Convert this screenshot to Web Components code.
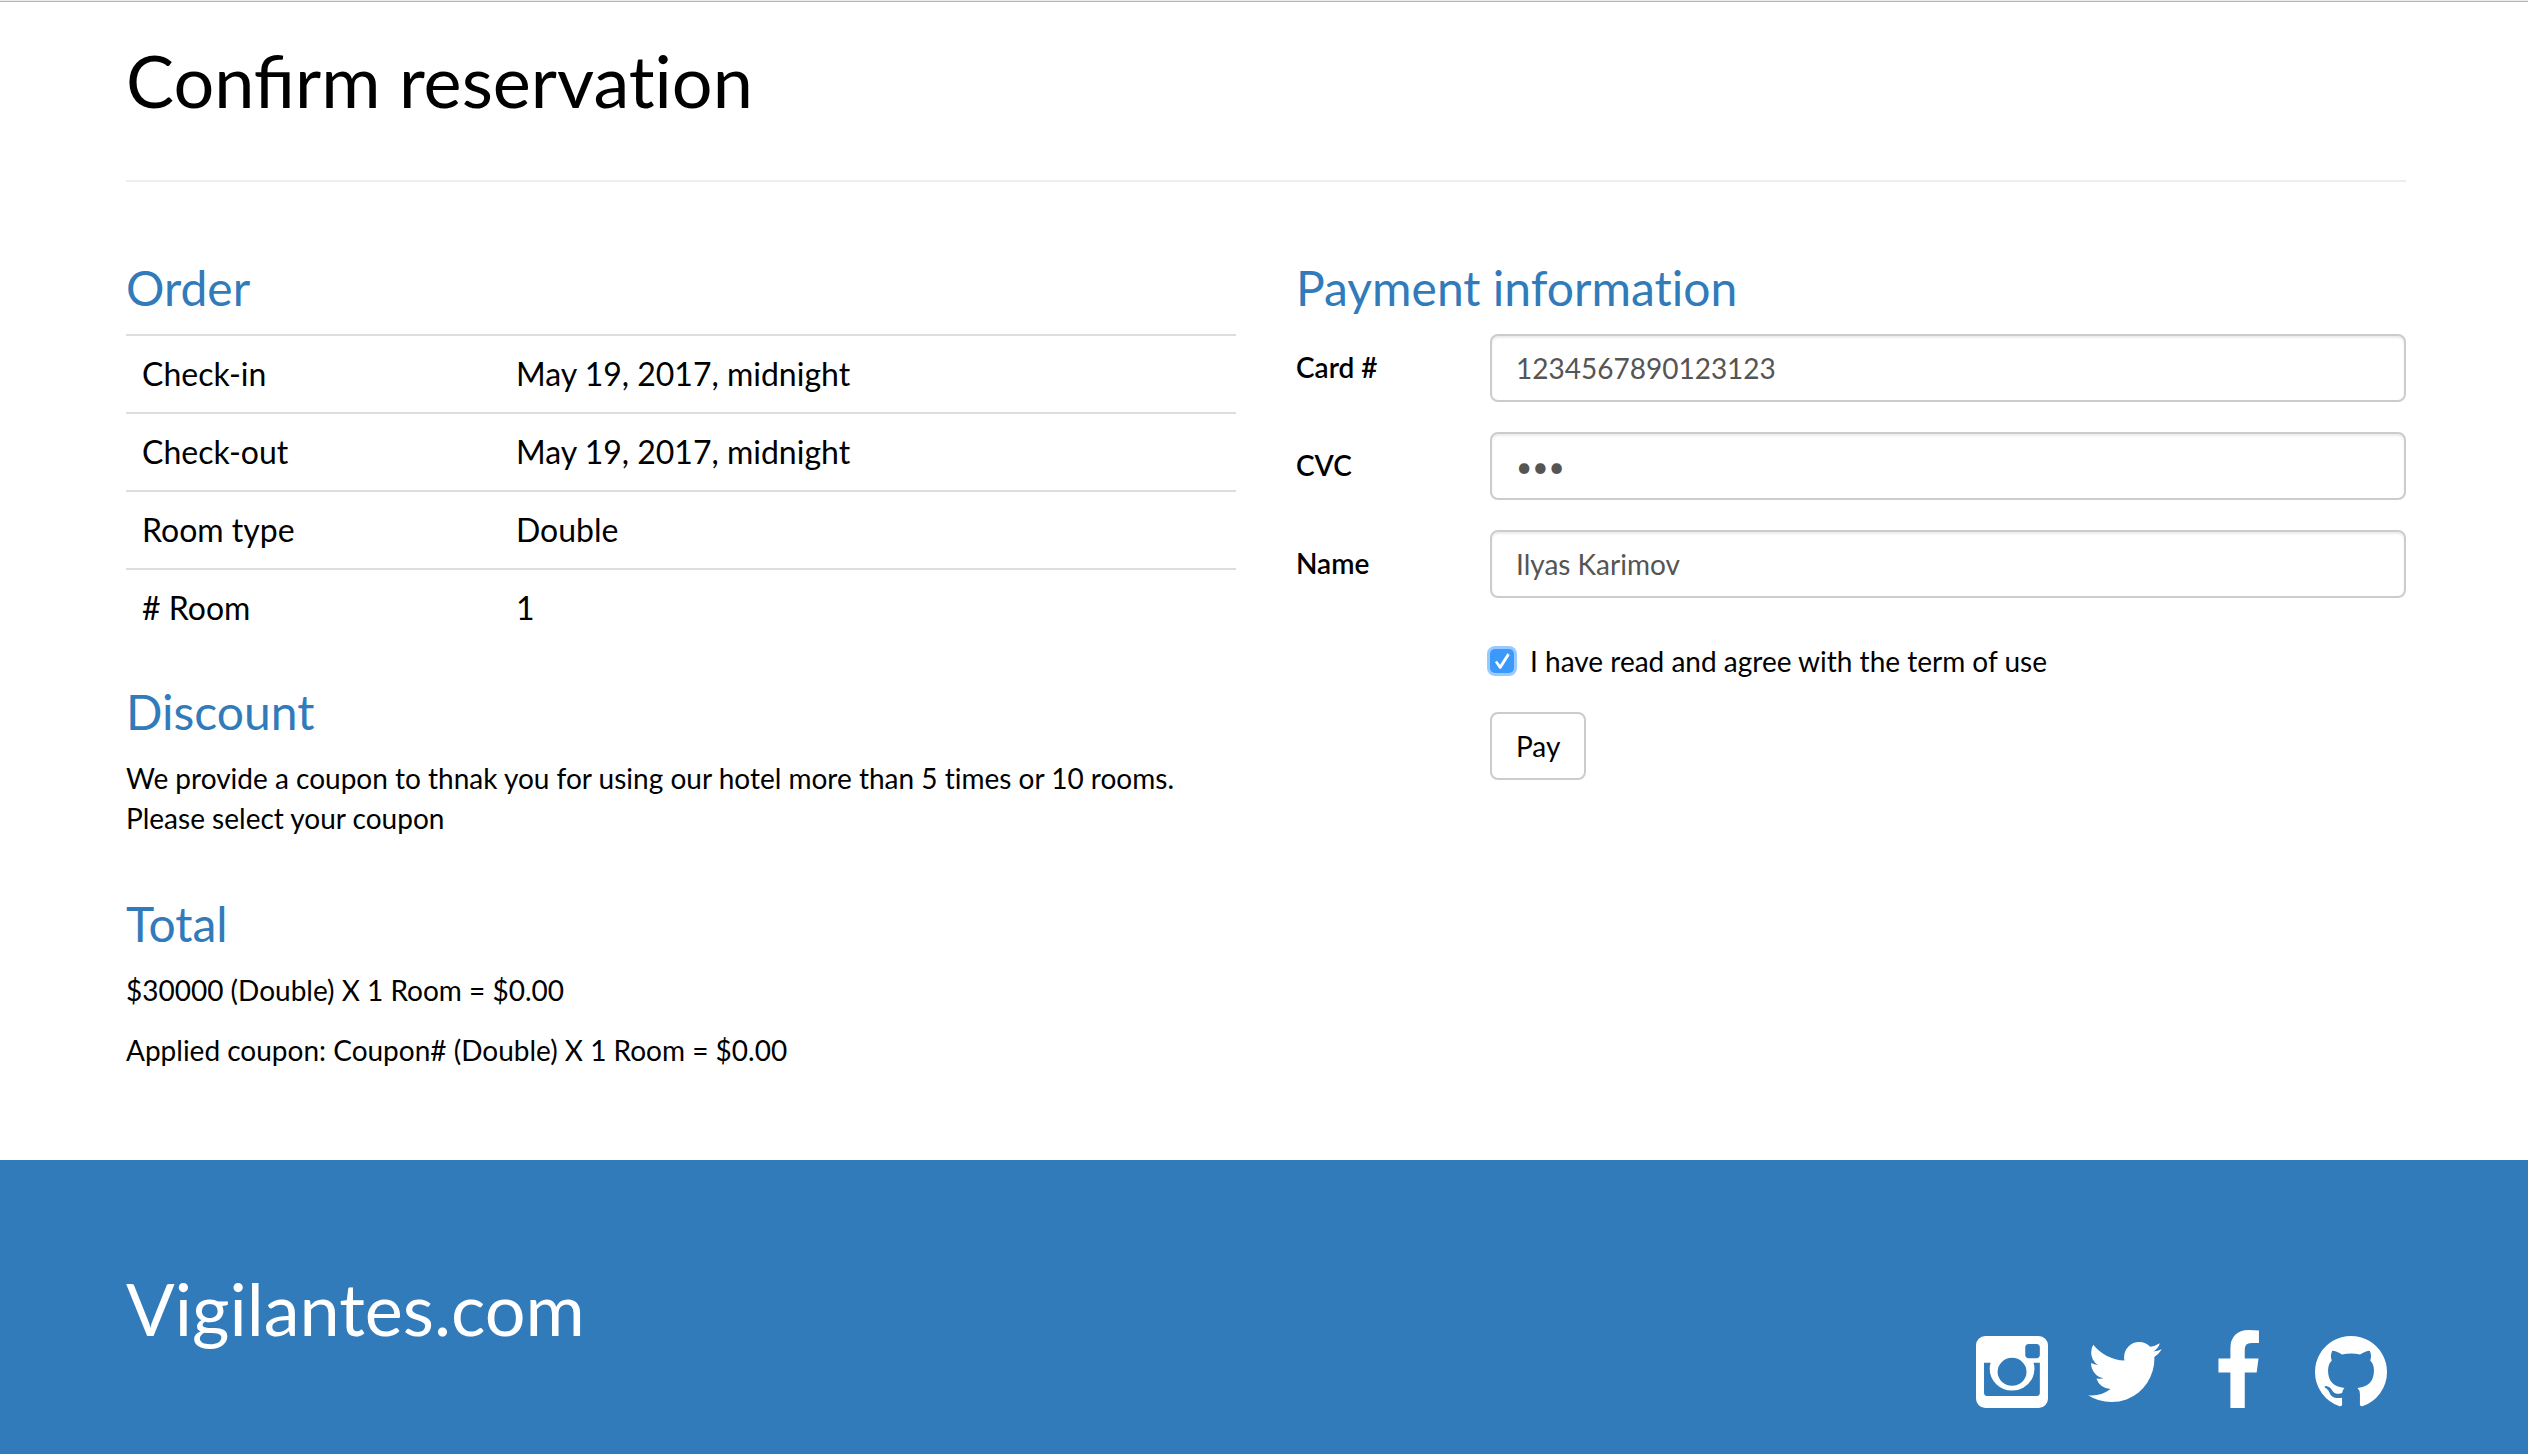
<!DOCTYPE html>
<html lang="en">
<head>
<meta charset="utf-8">
<title>Confirm reservation</title>
<style>
  html, body { margin: 0; min-height: 100%; background: #fff; }
  body {
    font-family: Lato, "Liberation Sans", sans-serif;
    font-size: 28px;
    line-height: 40px;
    font-variant-ligatures: none;
    color: #000;
    --brand: #327bba;
    --line: #ddd;
    --control: #ccc;
    --gutter-left: 126px;
    --gutter-right: 122px;
  }
  .joined { font-variant-ligatures: common-ligatures; }
</style>
</head>
<body>
<reservation-page>
  <page-title slot="title"><span class="joined">Confirm</span> reservation</page-title>

  <info-section slot="order" heading="Order">
    <order-table></order-table>
  </info-section>
  <info-section slot="order" heading="Discount">
    <p>We provide a coupon to thnak you for using our hotel more than 5 times or 10 rooms.<br>Please select your coupon</p>
  </info-section>
  <info-section slot="order" heading="Total">
    <p>$30000 (Double) X 1 Room = $0.00</p>
    <p>Applied coupon: Coupon# (Double) X 1 Room = $0.00</p>
  </info-section>

  <info-section slot="payment" heading="Payment information">
    <payment-form></payment-form>
  </info-section>

  <site-footer slot="footer">Vigilantes.com</site-footer>
</reservation-page>

<script>
function define(name, html, setup) {
  const template = document.createElement('template');
  template.innerHTML = html;
  customElements.define(name, class extends HTMLElement {
    constructor() {
      super();
      this.attachShadow({ mode: 'open' }).append(template.content.cloneNode(true));
    }
    connectedCallback() { if (setup) setup(this, this.shadowRoot); }
  });
}

define('reservation-page', `
  <style>
    :host { display: flex; flex-direction: column; min-height: 100vh; box-sizing: border-box; border-top: 1px solid #ebebeb; }
    main { padding: 0 var(--gutter-right) 0 var(--gutter-left); border-top: 1px solid #b4b4b4; }
    .columns { display: grid; grid-template-columns: 1fr 1fr; gap: 60px; padding: 80px 0 70px; }
    .column { display: flex; flex-direction: column; gap: 40px; min-width: 0; }
    .footer { flex: 1; display: flex; }
  </style>
  <main>
    <slot name="title"></slot>
    <div class="columns">
      <div class="column"><slot name="order"></slot></div>
      <div class="column"><slot name="payment"></slot></div>
    </div>
  </main>
  <div class="footer"><slot name="footer"></slot></div>
`);

define('page-title', `
  <style>
    :host { display: block; border-bottom: 2px solid #eee; padding: 38px 0 60px; }
    h1 { margin: 0; font-size: 72px; line-height: 80px; font-weight: 400; }
  </style>
  <h1><slot></slot></h1>
`);

define('info-section', `
  <style>
    :host { display: block; }
    h3 { margin: 0 0 20px; font-size: 48px; line-height: 52px; font-weight: 400; color: var(--brand); }
    ::slotted(p) { margin: 0 0 20px; }
  </style>
  <h3></h3>
  <slot></slot>
`, (host, root) => { root.querySelector('h3').textContent = host.getAttribute('heading'); });

define('order-table', `
  <style>
    :host { display: block; }
    table { width: 100%; border-collapse: collapse; table-layout: fixed; font-size: 32px; line-height: 44px; }
    th, td { padding: 16px; border-top: 2px solid var(--line); text-align: left; font-weight: 400; }
    th { width: 342px; }
  </style>
  <table><tbody>
    <tr><th scope="row">Check-in</th><td>May 19, 2017, midnight</td></tr>
    <tr><th scope="row">Check-out</th><td>May 19, 2017, midnight</td></tr>
    <tr><th scope="row">Room type</th><td>Double</td></tr>
    <tr><th scope="row"># Room</th><td>1</td></tr>
  </tbody></table>
`);

define('form-field', `
  <style>
    :host { display: grid; grid-template-columns: 164px 1fr; column-gap: 30px; }
    label { padding-top: 13px; font-weight: 600; }
    input {
      box-sizing: border-box; width: 100%; height: 68px; padding: 12px 24px;
      font: inherit; font-variant-ligatures: none; color: #555; background: #fff;
      border: 2px solid var(--control); border-radius: 8px;
      box-shadow: inset 0 2px 2px rgba(0,0,0,.075); outline: none;
    }
  </style>
  <label for="field"></label>
  <input id="field">
`, (host, root) => {
  const input = root.querySelector('input');
  root.querySelector('label').textContent = host.getAttribute('label');
  input.type = host.getAttribute('type') || 'text';
  input.value = host.getAttribute('value') || '';
});

define('payment-form', `
  <style>
    :host { display: block; }
    form { display: flex; flex-direction: column; gap: 30px; }
    .actions { padding-left: 194px; display: flex; flex-direction: column; align-items: flex-start; gap: 31px; }
    .agree { display: flex; align-items: center; gap: 16px; padding-top: 13px; }
    input {
      appearance: none; flex: none; margin: 0; width: 24px; height: 24px; border-radius: 5px;
      background: #3b99fc; box-shadow: 0 0 0 3px #99caff;
      display: flex; align-items: center; justify-content: center;
    }
    input:checked::before {
      content: ""; width: 16px; height: 16px; background: #fff;
      clip-path: polygon(6% 58%, 18% 48%, 38% 74%, 84% 2%, 98% 12%, 44% 98%, 34% 98%);
    }
    button {
      height: 68px; padding: 0 24px; font: inherit; color: #000; background: #fff;
      border: 2px solid var(--control); border-radius: 8px;
    }
  </style>
  <form>
    <form-field label="Card #" value="1234567890123123"></form-field>
    <form-field label="CVC" type="password" value="123"></form-field>
    <form-field label="Name" value="Ilyas Karimov"></form-field>
    <div class="actions">
      <div class="agree"><input type="checkbox" id="agree" checked><label for="agree">I have read and agree with the term of use</label></div>
      <button type="button">Pay</button>
    </div>
  </form>
`);

define('social-link', `
  <style>
    :host { display: block; }
    a { display: block; color: #fff; }
    svg { display: block; width: 84px; height: 84px; fill: currentColor; }
  </style>
  <a href="#"><svg viewBox="0 0 1792 1792" aria-hidden="true"><path/></svg></a>
`, (host, root) => {
  const glyphs = {
    Instagram: 'M1490 1346v-648h-135q20 63 20 131 0 126-64 232.5t-174 168.5-240 62q-197 0-337-135.5t-140-327.5q0-68 20-131h-141v648q0 26 17.5 43.5t43.5 17.5h1069q25 0 43-17.5t18-43.5zm-284-454q0-124-90.5-211.5t-218.5-87.5q-127 0-217.5 87.5t-90.5 211.5 90.5 211.5 217.5 87.5q128 0 218.5-87.5t90.5-211.5zm284-360v-165q0-28-20-48.5t-49-20.5h-174q-29 0-49 20.5t-20 48.5v165q0 29 20 49t49 20h174q29 0 49-20t20-49zm174-208v1142q0 81-58 139t-139 58h-1142q-81 0-139-58t-58-139v-1142q0-81 58-139t139-58h1142q81 0 139 58t58 139z',
    Twitter: 'M1684 408q-67 98-162 167 1 14 1 42 0 130-38 259.5t-115.5 248.5-184.5 210.5-258 146-323 54.5q-271 0-496-145 35 4 78 4 225 0 401-138-105-2-188-64.5t-114-159.5q33 5 61 5 43 0 85-11-112-23-185.5-111.5t-73.5-205.5v-4q68 38 146 41-66-44-105-115t-39-154q0-88 44-163 121 149 294.5 238.5t371.5 99.5q-8-38-8-74 0-134 94.5-228.5t228.5-94.5q140 0 236 102 109-21 205-78-37 115-142 178 93-10 186-50z',
    Facebook: 'M1343 12v264h-157q-86 0-116 36t-30 108v189h293l-39 296h-254v759h-306v-759h-255v-296h255v-218q0-186 104-288.5t277-102.5q147 0 228 12z',
    GitHub: 'M896 128q209 0 385.5 103t279.5 279.5 103 385.5q0 251-146.5 451.5t-378.5 277.5q-27 5-40-7t-13-30q0-3 .5-76.5t.5-134.5q0-97-52-142 57-6 102.5-18t94-39 81-66.5 53-105 20.5-150.5q0-119-79-206 37-91-8-204-28-9-81 11t-92 44l-38 24q-93-26-192-26t-192 26q-16-11-42.5-27t-83.5-38.5-85-13.5q-45 113-8 204-79 87-79 206 0 85 20.5 150t52.5 105 80.5 67 94 39 102.5 18q-39 36-49 103-21 10-45 15t-57 5-65.5-21.5-55.5-62.5q-19-32-48.5-52t-49.5-24l-20-3q-21 0-29 4.5t-5 11.5 9 14 13 12l7 5q22 10 43.5 38t31.5 51l10 23q13 38 44 61.5t67 30 69.5 7 55.5-3.5l23-4q0 38 .5 88.5t.5 54.5q0 18-13 30t-40 7q-232-77-378.5-277.5t-146.5-451.5q0-209 103-385.5t279.5-279.5 385.5-103z'
  };
  const name = host.getAttribute('name');
  root.querySelector('a').setAttribute('aria-label', name);
  root.querySelector('path').setAttribute('d', glyphs[name]);
});

define('site-footer', `
  <style>
    :host { display: block; flex: 1; background: var(--brand); color: #fff; }
    footer { display: flex; justify-content: space-between; padding: 108px var(--gutter-right) 40px var(--gutter-left); }
    .name { font-size: 72px; line-height: 80px; }
    nav { display: flex; gap: 29px; padding: 62px 13px 0 0; }
  </style>
  <footer>
    <div class="name"><slot></slot></div>
    <nav aria-label="Social">
      <social-link name="Instagram"></social-link>
      <social-link name="Twitter"></social-link>
      <social-link name="Facebook"></social-link>
      <social-link name="GitHub"></social-link>
    </nav>
  </footer>
`);
</script>
</body>
</html>
